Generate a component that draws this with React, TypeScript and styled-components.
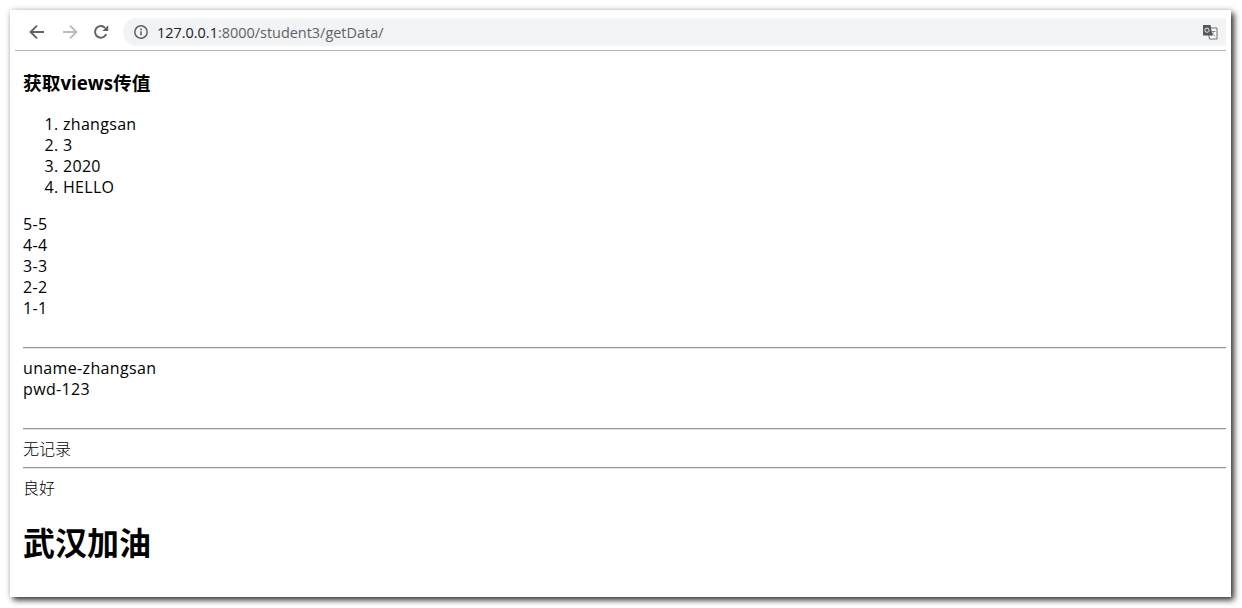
import type { FC } from 'react';
import styled, { createGlobalStyle } from 'styled-components';

const infoList = ['zhangsan', '3', '2020', 'HELLO'];
const countdown = ['5-5', '4-4', '3-3', '2-2', '1-1'];
const credentials = ['uname-zhangsan', 'pwd-123'];

const App: FC = () => (
  <>
    <GlobalStyle />
    <Window>
      <Toolbar>
        <NavButton aria-label="back">
          <svg width="16" height="16" viewBox="0 0 16 16">
            <path d="M15 8H2.200M8 1.600 1.600 8 8 14.400" fill="none" stroke="#5f6368" strokeWidth="2" />
          </svg>
        </NavButton>
        <NavButton aria-label="forward">
          <svg width="16" height="16" viewBox="0 0 16 16">
            <path d="M2 8h12.800M9 1.600 15.400 8 9 14.400" fill="none" stroke="#babcbe" strokeWidth="2" />
          </svg>
        </NavButton>
        <NavButton aria-label="reload">
          <svg width="16" height="16" viewBox="0 0 16 16">
            <path d="M13.200 10.200A5.800 5.800 0 1 1 12.100 3.900" fill="none" stroke="#5f6368" strokeWidth="2" />
            <path d="M9.400 7h5.800V1.200z" fill="#5f6368" />
          </svg>
        </NavButton>
        <AddressBar>
          <svg width="16" height="16" viewBox="0 0 16 16">
            <circle cx="8" cy="8" r="6.200" fill="none" stroke="#5f6368" strokeWidth="1.500" />
            <path d="M7.200 7.200h1.600v4H7.200zM7.200 4.600h1.600v1.600H7.200z" fill="#5f6368" />
          </svg>
          <Url>
            127.0.0.1<UrlPath>:8000/student3/getData/</UrlPath>
          </Url>
          <TranslateIcon width="16" height="16" viewBox="0 0 16 16">
            <path d="M5.500 4h9.500v11h-7.500z" fill="#fff" stroke="#6d6f72" />
            <path d="M9.500 7.500h4M11.400 7.500c-.3 2-1.200 3.600-2.300 4.600M9.900 9c.7 1.500 1.800 2.600 3.400 3.300" fill="none" stroke="#6d6f72" strokeWidth=".8" />
            <path d="M1 1h7.500l2 10.500H1z" fill="#55585c" />
            <circle cx="5" cy="6.200" r="2.100" fill="none" stroke="#e8eaed" strokeWidth="1" />
          </TranslateIcon>
        </AddressBar>
      </Toolbar>
      <Page>
        <SubHeading>获取views传值</SubHeading>
        <OrderedList>
          {infoList.map((item) => (
            <li key={item}>{item}</li>
          ))}
        </OrderedList>
        <Lines>
          {countdown.map((line) => (
            <div key={line}>{line}</div>
          ))}
        </Lines>
        <Rule />
        <Lines>
          {credentials.map((line) => (
            <div key={line}>{line}</div>
          ))}
        </Lines>
        <Rule />
        <PlainLine>无记录</PlainLine>
        <Rule $tight />
        <PlainLine>良好</PlainLine>
        <MainHeading>武汉加油</MainHeading>
      </Page>
    </Window>
  </>
);

export default App;

const GlobalStyle = createGlobalStyle`
  html, body {
    margin: 0;
    background: #fff;
  }

  body {
    box-sizing: border-box;
    height: 608px;
    padding: 10px 0 11px 10px;
    overflow: hidden;
    font-family: "Open Sans", "Noto Sans CJK SC", sans-serif;
    font-size: 16px;
    line-height: 21px;
    color: #000;
  }
`;

const Window = styled.div`
  box-sizing: border-box;
  width: 1221px;
  height: 587px;
  background: #fff;
  box-shadow: 3px 3px 6px rgba(0, 0, 0, 0.8), 0 0 6px rgba(0, 0, 0, 0.12);
  overflow: hidden;
`;

const Toolbar = styled.div`
  display: flex;
  align-items: flex-start;
  height: 41px;
  box-sizing: border-box;
  margin: 0 5px;
  padding: 8px 0 0 6px;
  border-bottom: 1px solid #b4b4b4;
`;

const NavButton = styled.div`
  display: flex;
  align-items: center;
  justify-content: center;
  width: 32px;
  height: 28px;
`;

const AddressBar = styled.div`
  display: flex;
  align-items: center;
  flex: 1;
  height: 28px;
  margin-left: 6px;
  padding: 0 8px 0 10px;
  border-radius: 14px 0 0 14px;
  background: #f1f3f4;
`;

const Url = styled.span`
  flex: 1;
  margin-left: 8px;
  font-family: "Open Sans", sans-serif;
  font-size: 14.45px;
  color: #202124;
`;

const UrlPath = styled.span`
  color: #5f6368;
`;

const TranslateIcon = styled.svg`
  flex: none;
`;

const Page = styled.div`
  padding: 0 5px 0 13px;
`;

const SubHeading = styled.h3`
  margin: 21px 0 0;
  font-size: 18.72px;
  font-weight: 700;
  line-height: 21px;
`;

const OrderedList = styled.ol`
  margin: 21px 0 16px;
  padding: 0 0 0 40px;
  letter-spacing: 0.3px;
`;

const Lines = styled.div`
  letter-spacing: 0.35px;
`;

const Rule = styled.hr<{ readonly $tight?: boolean }>`
  height: 1px;
  margin: ${({ $tight = false }) => ($tight ? '7px 0 10px' : '28px 0 10px')};
  border: 0;
  background: #969696;
  box-shadow: 0 1px 0 #e2e2e2;
`;

const PlainLine = styled.div`
  font-size: 16px;
  font-weight: 300;
`;

const MainHeading = styled.h1`
  margin: 23px 0 0;
  font-size: 32px;
  font-weight: 700;
  line-height: 42px;
`;
